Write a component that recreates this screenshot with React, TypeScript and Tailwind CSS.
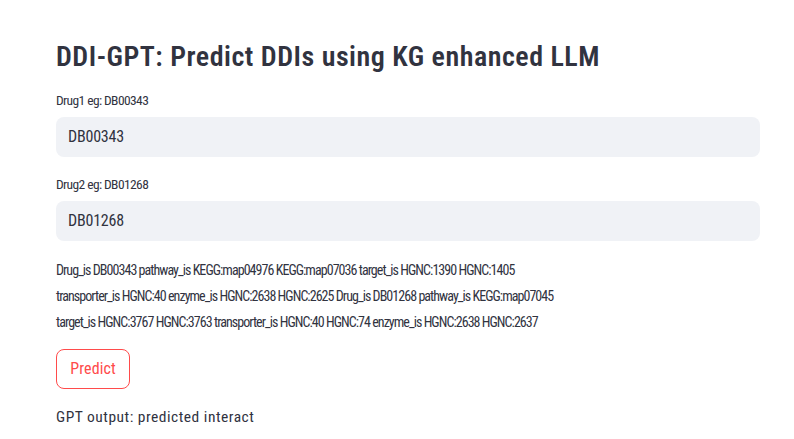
const lines = [
  "Drug_is DB00343 pathway_is KEGG:map04976 KEGG:map07036 target_is HGNC:1390 HGNC:1405",
  "transporter_is HGNC:40 enzyme_is HGNC:2638 HGNC:2625 Drug_is DB01268 pathway_is KEGG:map07045",
  "target_is HGNC:3767 HGNC:3763 transporter_is HGNC:40 HGNC:74 enzyme_is HGNC:2638 HGNC:2637",
];

function TextField({ label, value }: { label: string; value: string }) {
  return (
    <div>
      <label className="block text-[13.5px] leading-[18px] tracking-[-0.6px] mb-[8px]">{label}</label>
      <div className="h-[40px] rounded-[8px] bg-[#f0f2f6] w-[704px] flex items-center px-[12px] text-[16px] tracking-[-0.2px]">
        {value}
      </div>
    </div>
  );
}

export default function App() {
  return (
    <div className="min-h-screen bg-white text-[#31333f] font-['Roboto_Condensed',sans-serif]">
      <div className="px-[56px] pt-[40px]">
        <h1 className="text-[28px] font-semibold leading-[34px] tracking-[0.5px] mb-[17px]">
          DDI-GPT: Predict DDIs using KG enhanced LLM
        </h1>

        <TextField label="Drug1 eg: DB00343" value="DB00343" />
        <div className="h-[18px]" />
        <TextField label="Drug2 eg: DB01268" value="DB01268" />

        <p className="mt-[16px] text-[14px] leading-[26px] tracking-[-0.95px]">
          {lines.map((l) => (
            <span key={l} className="block whitespace-nowrap">
              {l}
            </span>
          ))}
        </p>

        <button className="mt-[14px] h-[40px] w-[74px] rounded-[8px] border border-[#ff4b4b] text-[#ff4b4b] text-[16px] tracking-[0.1px] bg-white">
          Predict
        </button>

        <p className="mt-[16px] text-[15.5px] leading-[24px] tracking-[0.5px]">GPT output: predicted interact</p>
      </div>
    </div>
  );
}
